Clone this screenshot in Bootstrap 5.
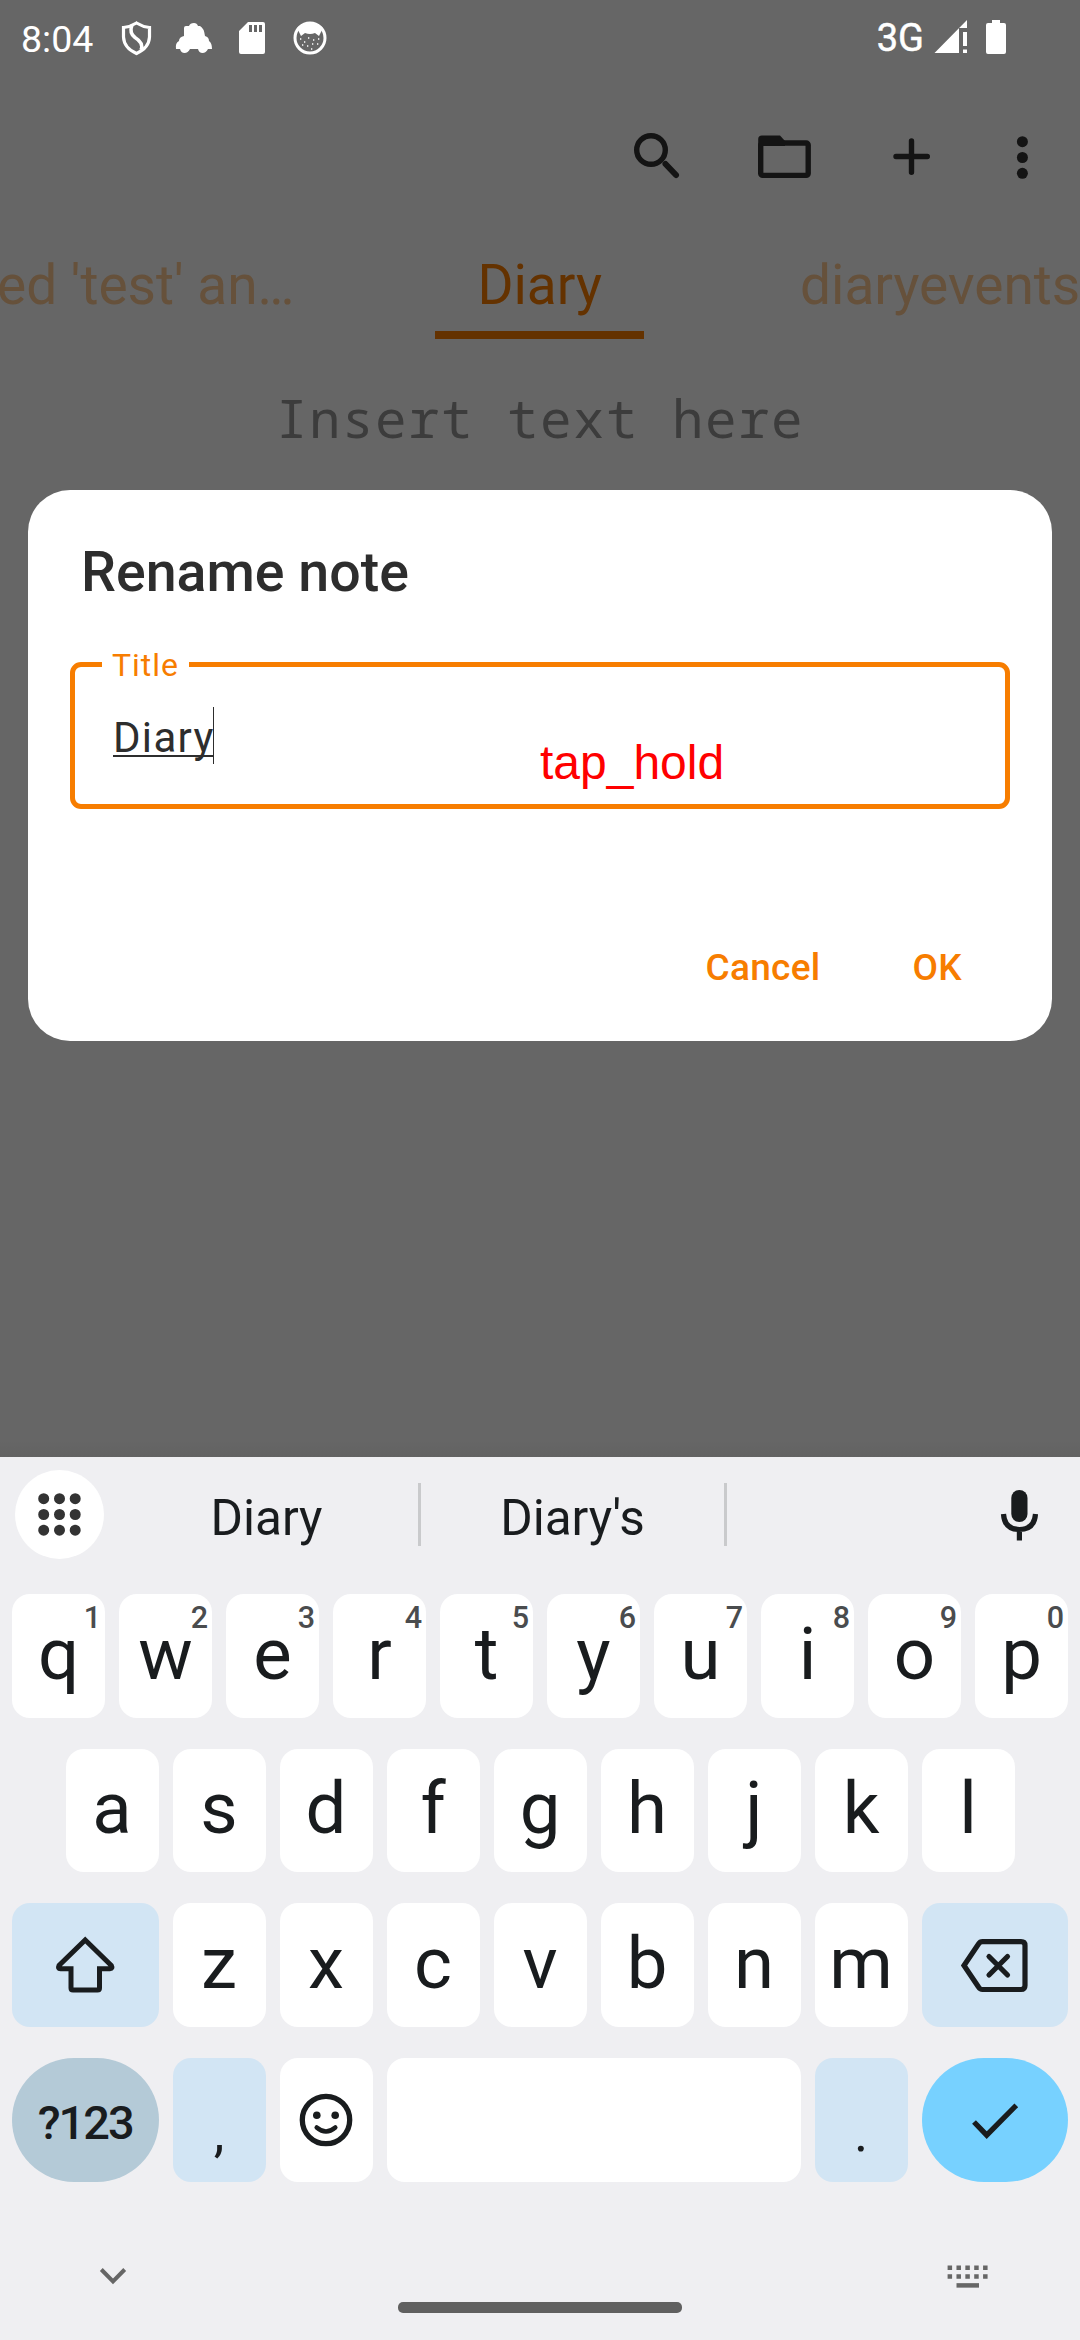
<!DOCTYPE html>
<html lang="en">
<head>
<meta charset="utf-8">
<meta name="viewport" content="width=device-width, initial-scale=1">
<title>Rename note</title>
<link href="https://cdn.jsdelivr.net/npm/bootstrap@5.3.0/dist/css/bootstrap.min.css" rel="stylesheet">
<style>
body{width:1080px;height:2340px;overflow:hidden;background:#666;font-family:Roboto,sans-serif;color:#2d2d2d}
svg{display:block;flex:none}
.statusbar{height:76px;padding:0 74px 0 21px;color:#fff;font-size:38px;line-height:78px}
.clock{width:74px;font-size:37.5px}
.network{line-height:76px;-webkit-text-stroke:.5px #fff}
.toolbar{height:162px;padding:0 28px 0 630px;color:#141414}
.tabs{height:101px;font-size:55px;line-height:94px;color:#66513b;white-space:nowrap}
.tab-side{width:436px}
.tab-active{width:209px;color:#643200;border-bottom:8px solid #643200;height:101px}
.hint{height:151px;font:52.5px/158px "Noto Sans Mono","DejaVu Sans Mono",monospace;letter-spacing:1.5px;color:#3c3c3c}
.sheet{margin:0 28px;height:551px;border-radius:42px;padding:0 42px}
.sheet h1{font-size:55.5px;line-height:66px;font-weight:500;margin:0;padding:50px 0 0 11px;height:172px}
.field{height:147px;border:5px solid #f77d00;border-radius:11px;padding:0 38px}
.field-label{top:-22px;left:27px;width:87px;height:40px;background:#fff;color:#f77d00;font-size:32px;line-height:40px;letter-spacing:1px}
.field-value{font-size:42px;line-height:58px;letter-spacing:1.3px;height:57px;margin-top:40px;border-right:1px solid #2d2d2d;width:101px}
.field-value span{display:block;height:50px;border-bottom:2px solid #2d2d2d;line-height:61px}
.touch-note{left:465px;top:68px;color:#f00;font:48px/55px "Liberation Sans",Arial,sans-serif}
.actions{padding:132px 48px 0 0;gap:92px}
.actions .btn{color:#f77d00;font-size:37px;line-height:54px;font-weight:500;letter-spacing:.3px}
.shade{height:416px;background:linear-gradient(#666 96%,#626262)}
.keyboard{height:883px;background:#efeff2;color:#191c1e}
.suggest{height:137px;padding:0 27px 22px 15px;font-size:49.5px}
.round-btn{width:89px;height:89px}
.word{width:303px;line-height:70px;padding-top:6px}
.word-first{margin-left:11px}
.sep{width:3px;height:63px;background:#c9cacc}
.keys{gap:31px;padding:0 12px}
.keyrow{gap:14px;height:123.7px}
.keycap{width:93px;border-radius:18px;background:#fff;font-size:72.5px;line-height:1}
.letter{padding-bottom:2px}
.keycap sup{position:absolute;right:4px;top:8px;font-size:30.5px;line-height:31px;font-weight:500;color:#4a4c4e}
.wide{width:146.5px}
.tint{background:#d2e5f4}
.pill{border-radius:62px}
.sym{background:#b4cad7;font-size:47px;font-weight:500;letter-spacing:-2px;padding-top:6px}
.go{background:#77d1ff}
.punct{font-size:54px;padding-top:27px}
.navarea{height:157px;color:#666}
.navarea .homebar{width:284px;height:11px;border-radius:5px;background:#606060;margin-top:120px}
</style>
<script src="https://cdn.jsdelivr.net/npm/bootstrap@5.3.0/dist/js/bootstrap.bundle.min.js"></script>
</head>
<body>
<header class="statusbar d-flex justify-content-between">
  <div class="d-flex"><span class="clock">8:04</span>
    <svg width="240" height="76" viewBox="95 0 240 76" fill="#fff">
      <path d="M136.500 23Q143 27 149.500 27.500V37Q149 48 136.500 53.500Q124 48 123.500 37V27.500Q130 27 136.500 23Z" fill="none" stroke="#fff" stroke-width="3.200"/>
      <path d="M132 25Q129 33 135 37.500Q144 43 141 50" fill="none" stroke="#fff" stroke-width="3.500"/>
      <path d="M184 28Q184 26 186 26H189Q190 23 194 23Q197 23 198 26H200Q204 28 205 36Q209 37 209 41Q212 43 212 49H208Q206 53 202.500 53Q199 53 198 49H190Q188 53 184.500 53Q181 53 180 49H176Q175 43 179 41Q179 37 184 36Z"/>
      <path fill-rule="evenodd" d="M248 22H263Q265 22 265 24V52Q265 54 263 54H241Q239 54 239 52V31ZM249 25V32H252V25ZM254 25V32H257V25ZM259 25V32H262V25Z"/>
      <circle cx="310" cy="38" r="15" fill="none" stroke="#fff" stroke-width="3"/>
      <path d="M297 28Q310 17 323 28L319 36L315 33Q310 35 305 33L301 36Z"/>
      <path d="M300 39h1.300M304 42h1.300M308 38h1.300M313 40h1.300M318 39h1.300M302 45h1.300M307 46h1.300M312 44h1.300M317 44h1.300M311 49h1.300" stroke="#fff" stroke-width="1.300"/>
    </svg></div>
  <div class="d-flex"><span class="network">3G</span>
    <svg width="82" height="76" viewBox="924 0 82 76" fill="#fff"><path d="M934.500 53L967 20V28H959V53ZM963 32H967V46H963ZM963 49.500H967V53H963Z"/><path d="M992 20H1000V23H1004Q1006 23 1006 25V52Q1006 54 1004 54H988Q986 54 986 52V25Q986 23 988 23H992Z"/></svg></div>
</header>
<nav class="toolbar">
  <svg width="422" height="162" viewBox="630 76 422 162" fill="none" stroke="currentColor" stroke-width="5.400" stroke-linecap="round">
    <circle cx="651" cy="150" r="14.300"/><path d="M665.500 164L676 175" stroke-width="6"/>
    <rect x="760.700" y="143" width="47.500" height="32.400" rx="2"/><path d="M758.200 143V139Q758.200 135.500 762 135.500H780L785 141V146H758.200Z" fill="currentColor" stroke="none"/>
    <path d="M911.500 141V172.300M896 156.500H927.300"/>
    <g fill="currentColor" stroke="none"><circle cx="1022.400" cy="141.700" r="5.500"/><circle cx="1022.400" cy="157.500" r="5.500"/><circle cx="1022.400" cy="173.300" r="5.500"/></g>
  </svg>
</nav>
<div class="tabs d-flex align-items-start">
  <div class="tab-side" style="text-indent:-3px">ed 'test' an…</div>
  <div class="tab-active text-center">Diary</div>
  <div class="tab-side" style="padding-left:156px">diaryevents</div>
</div>
<div class="hint text-center">Insert text here</div>
<main class="sheet bg-white">
  <h1>Rename note</h1>
  <div class="field position-relative d-flex align-items-start">
    <label class="field-label position-absolute text-center">Title</label>
    <div class="field-value"><span>Diary</span></div>
    <div class="touch-note position-absolute">tap_hold</div>
  </div>
  <div class="actions d-flex justify-content-end">
    <button class="btn p-0 border-0">Cancel</button><button class="btn p-0 border-0">OK</button>
  </div>
</main>
<div class="shade"></div>
<section class="keyboard">
  <div class="suggest d-flex align-items-center">
    <div class="round-btn rounded-circle bg-white"><svg width="89" height="89" viewBox="0 0 89 89" fill="none" stroke="#333" stroke-width="11" stroke-linecap="round"><path d="M28.700 28.700h0M44.500 28.700h0M60.200 28.700h0M28.700 44.500h0M44.500 44.500h0M60.200 44.500h0M28.700 60.200h0M44.500 60.200h0M60.200 60.200h0"/></svg></div>
    <div class="word word-first text-center">Diary</div><div class="sep"></div>
    <div class="word text-center">Diary's</div><div class="sep"></div>
    <svg class="ms-auto" width="68" height="60" viewBox="985 1484 68 60"><rect x="1011.300" y="1489" width="16.200" height="32" rx="8.100" fill="currentColor"/><path d="M1003.500 1513Q1004.500 1528.500 1019.400 1528.500Q1034.300 1528.500 1035.500 1513M1019.400 1528V1539.500" fill="none" stroke="currentColor" stroke-width="5.200"/></svg>
  </div>
  <div class="keys d-flex flex-column">
    <div class="keyrow d-flex" id="rowTop"></div>
    <div class="keyrow d-flex justify-content-center" id="rowHome"></div>
    <div class="keyrow d-flex">
      <div class="keycap wide tint d-flex align-items-center justify-content-center"><svg width="62" height="62" viewBox="54 1934 62 62" fill="none" stroke="currentColor" stroke-width="5"><path d="M85.200 1940L111.300 1965.500Q113 1968.700 110 1968.700H99.500V1988Q99.500 1990 97.500 1990H73Q71 1990 71 1988V1968.700H60.500Q57.500 1968.700 59 1965.500Z"/></svg></div>
      <div class="d-flex keyrow" id="rowLow"></div>
      <div class="keycap wide tint d-flex align-items-center justify-content-center"><svg width="70" height="58" viewBox="959 1938 70 58" fill="none" stroke="currentColor" stroke-width="5.200" stroke-linecap="round"><path d="M963 1967.500L977.500 1946Q979 1943.700 981.500 1943.700H1020Q1024 1943.700 1024 1947.500V1987.500Q1024 1991.500 1020 1991.500H981.500Q979 1991.500 977.500 1989Z"/><path d="M988 1958.500L1006.500 1977M1006.500 1958.500L988 1977"/></svg></div>
    </div>
    <div class="keyrow d-flex">
      <div class="keycap wide pill sym d-flex align-items-center justify-content-center">?123</div>
      <div class="keycap tint punct d-flex align-items-center justify-content-center">,</div>
      <div class="keycap d-flex align-items-center justify-content-center"><svg width="60" height="60" viewBox="-30 -30 60 60" fill="none" stroke="currentColor" stroke-width="5.300" stroke-linecap="round"><circle r="23.700"/><path d="M-9.300 7.500Q0 15.500 9.300 7.500" stroke-width="4.500"/><g fill="currentColor" stroke="none"><circle cx="-9.200" cy="-4.700" r="3.800"/><circle cx="9.200" cy="-4.700" r="3.800"/></g></svg></div>
      <div class="keycap flex-grow-1"></div>
      <div class="keycap tint punct d-flex align-items-center justify-content-center">.</div>
      <div class="keycap wide pill go d-flex align-items-center justify-content-center"><svg width="60" height="60" viewBox="965 2090 60 60" fill="none" stroke="currentColor" stroke-width="5.300"><path d="M974 2122L986.700 2135.200L1016.300 2105.300"/></svg></div>
    </div>
  </div>
  <div class="navarea d-flex justify-content-between align-items-start">
    <svg width="300" height="157" viewBox="0 2183 300 157" fill="none" stroke="currentColor" stroke-width="4"><path d="M101.300 2270.500L113 2282.500L124.700 2270.500"/></svg>
    <div class="homebar"></div>
    <svg width="300" height="157" viewBox="780 2183 300 157" fill="none" stroke="currentColor" stroke-width="4.500"><path d="M947.600 2268.700H989M947.600 2277.500H989" stroke-dasharray="4.500 4.370"/><path d="M956.500 2286.400H979"/></svg>
  </div>
</section>
<script>
// Fill the letter rows; the top row also carries the digit hints.
function fillRow(id, letters, digits) {
  document.getElementById(id).innerHTML = [...letters].map((c, i) =>
    `<div class="keycap letter position-relative d-flex align-items-center justify-content-center">${c}${digits ? `<sup>${digits[i]}</sup>` : ''}</div>`).join('');
}
fillRow('rowTop', 'qwertyuiop', '1234567890');
fillRow('rowHome', 'asdfghjkl');
fillRow('rowLow', 'zxcvbnm');
</script>
</body>
</html>
